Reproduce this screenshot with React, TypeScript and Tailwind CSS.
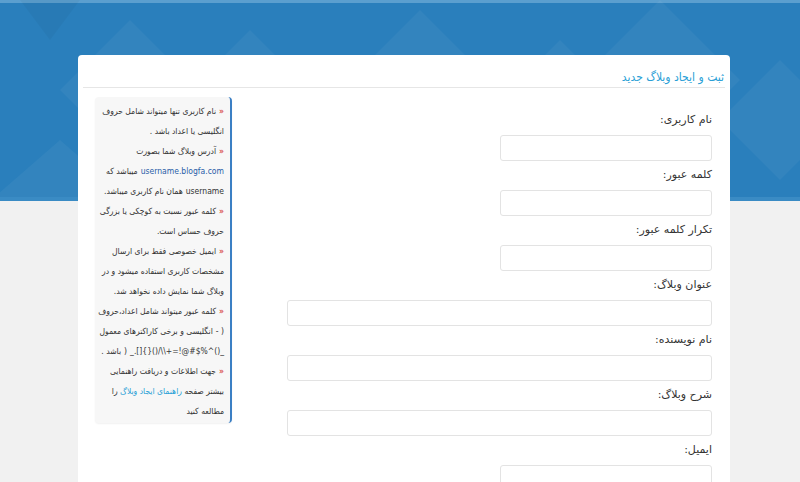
import React from "react";

const baseFont = { fontFamily: '"DejaVu Sans", sans-serif' };
const narrow = { fontFamily: '"DejaVu Sans Condensed", "DejaVu Sans", sans-serif' };

function Bullet() {
  return <span className="text-[#d9534f] font-bold ml-[3px]">«</span>;
}

function Field({ label, wide }: { label: string; wide?: boolean }) {
  return (
    <div className="mb-[3px]" dir="rtl">
      <div className="h-[22px] leading-[22px] text-[11px] text-[#333]">{label}</div>
      <div className="mt-[4px]">
        <input
          className={
            "h-[26px] bg-white border border-[#e3e3e3] rounded-[3px] outline-none " +
            (wide ? "w-[425px]" : "w-[212px]")
          }
        />
      </div>
    </div>
  );
}

function Decor() {
  return (
    <svg className="absolute inset-0 w-full h-[201px]" viewBox="0 0 800 201" preserveAspectRatio="none">
      <rect x="0" y="0" width="800" height="201" fill="#2a7fbc" />
      <rect x="0" y="0" width="800" height="3" fill="#5b9fcf" />
      <g fill="#ffffff" fillOpacity="0.045">
        <polygon points="130,20 200,90 130,160 60,90" />
        <polygon points="250,30 310,90 250,150 190,90" />
        <polygon points="420,10 500,90 420,170 340,90" />
        <polygon points="560,40 610,90 560,140 510,90" />
        <polygon points="660,0 740,80 660,160 580,80" />
        <polygon points="780,60 840,120 780,180 720,120" />
        <polygon points="60,140 130,201 -10,201" />
        <polygon points="330,120 400,190 330,201 260,190" />
      </g>
      <g fill="#000000" fillOpacity="0.035">
        <polygon points="20,0 80,0 50,40" />
        <polygon points="520,120 580,180 520,201 460,180" />
      </g>
      <rect x="0" y="197" width="800" height="4" fill="#3a8bc4" />
    </svg>
  );
}

// mixed latin / persian line, right aligned
function Row({ children }: { children: React.ReactNode }) {
  return <div className="flex flex-row justify-end gap-[3px] [direction:ltr]">{children}</div>;
}

function Ltr({ children }: { children: React.ReactNode }) {
  return <span className="[direction:ltr] [unicode-bidi:isolate]">{children}</span>;
}

function Rtl({ children }: { children: React.ReactNode }) {
  return <span className="[direction:rtl] [unicode-bidi:isolate]">{children}</span>;
}

export default function App() {
  const lines: React.ReactNode[] = [
    <div dir="rtl"><Bullet />نام کاربری تنها میتواند شامل حروف</div>,
    <div dir="rtl">انگلیسی یا اعداد باشد .</div>,
    <div dir="rtl"><Bullet />آدرس وبلاگ شما بصورت</div>,
    <Row>
      <Rtl>میباشد که</Rtl>
      <Ltr><span className="text-[#2a5ea8]">username.blogfa.com</span></Ltr>
    </Row>,
    <Row>
      <Rtl>همان نام کاربری میباشد.</Rtl>
      <Ltr>username</Ltr>
    </Row>,
    <div dir="rtl"><Bullet />کلمه عبور نسبت به کوچکی یا بزرگی</div>,
    <div dir="rtl">حروف حساس است.</div>,
    <div dir="rtl"><Bullet />ایمیل خصوصی فقط برای ارسال</div>,
    <div dir="rtl">مشخصات کاربری استفاده میشود و در</div>,
    <div dir="rtl">وبلاگ شما نمایش داده نخواهد شد.</div>,
    <div dir="rtl"><Bullet />کلمه عبور میتواند شامل اعداد،حروف</div>,
    <Row>
      <Rtl>انگلیسی و برخی کاراکترهای معمول</Rtl>
      <Ltr>- )</Ltr>
    </Row>,
    <Row>
      <Rtl>باشد .</Rtl>
      <Ltr>)</Ltr>
      <Ltr>{"_.[]{}()/\\\\+=!@#$%^()_"}</Ltr>
    </Row>,
    <div dir="rtl"><Bullet />جهت اطلاعات و دریافت راهنمایی</div>,
    <div dir="rtl">بیشتر صفحه <span className="text-[#2a9fd6]">راهنمای ایجاد وبلاگ</span> را</div>,
    <div dir="rtl">مطالعه کنید</div>,
  ];

  return (
    <div className="relative min-h-[482px] bg-[#f1f1f1] overflow-hidden" style={baseFont}>
      <Decor />
      <div className="relative pt-[55px] pl-[78px]">
        <div className="w-[652px] min-h-[440px] bg-white rounded-[4px]">
          <div className="mx-[5px] h-[33px] border-b border-[#e6e6e6] text-right pt-[9px] pr-[1px]">
            <span dir="rtl" className="text-[12px] leading-[18px] text-[#2a9fd6]" style={narrow}>
              ثبت و ایجاد وبلاگ جدید
            </span>
          </div>
          <div className="flex pl-[17px] pr-[18px] pt-[9px]">
            <div
              className="w-[137px] h-[326px] bg-[#f7f7f7] border-r-2 border-[#3b7fc4] rounded-[4px] pt-[4px] pr-[6px] text-[8.5px] leading-[20px] text-[#333] text-right whitespace-nowrap shadow-[0_1px_2px_rgba(0,0,0,0.06)]"
              style={narrow}
            >
              {lines.map((l, i) => (
                <div key={i}>{l}</div>
              ))}
            </div>
            <div className="ml-auto w-[425px] pt-[12px] flex flex-col items-end">
              <Field label="نام کاربری:" />
              <Field label="کلمه عبور:" />
              <Field label="تکرار کلمه عبور:" />
              <Field label="عنوان وبلاگ:" wide />
              <Field label="نام نویسنده:" wide />
              <Field label="شرح وبلاگ:" wide />
              <Field label="ایمیل:" />
            </div>
          </div>
        </div>
      </div>
    </div>
  );
}
